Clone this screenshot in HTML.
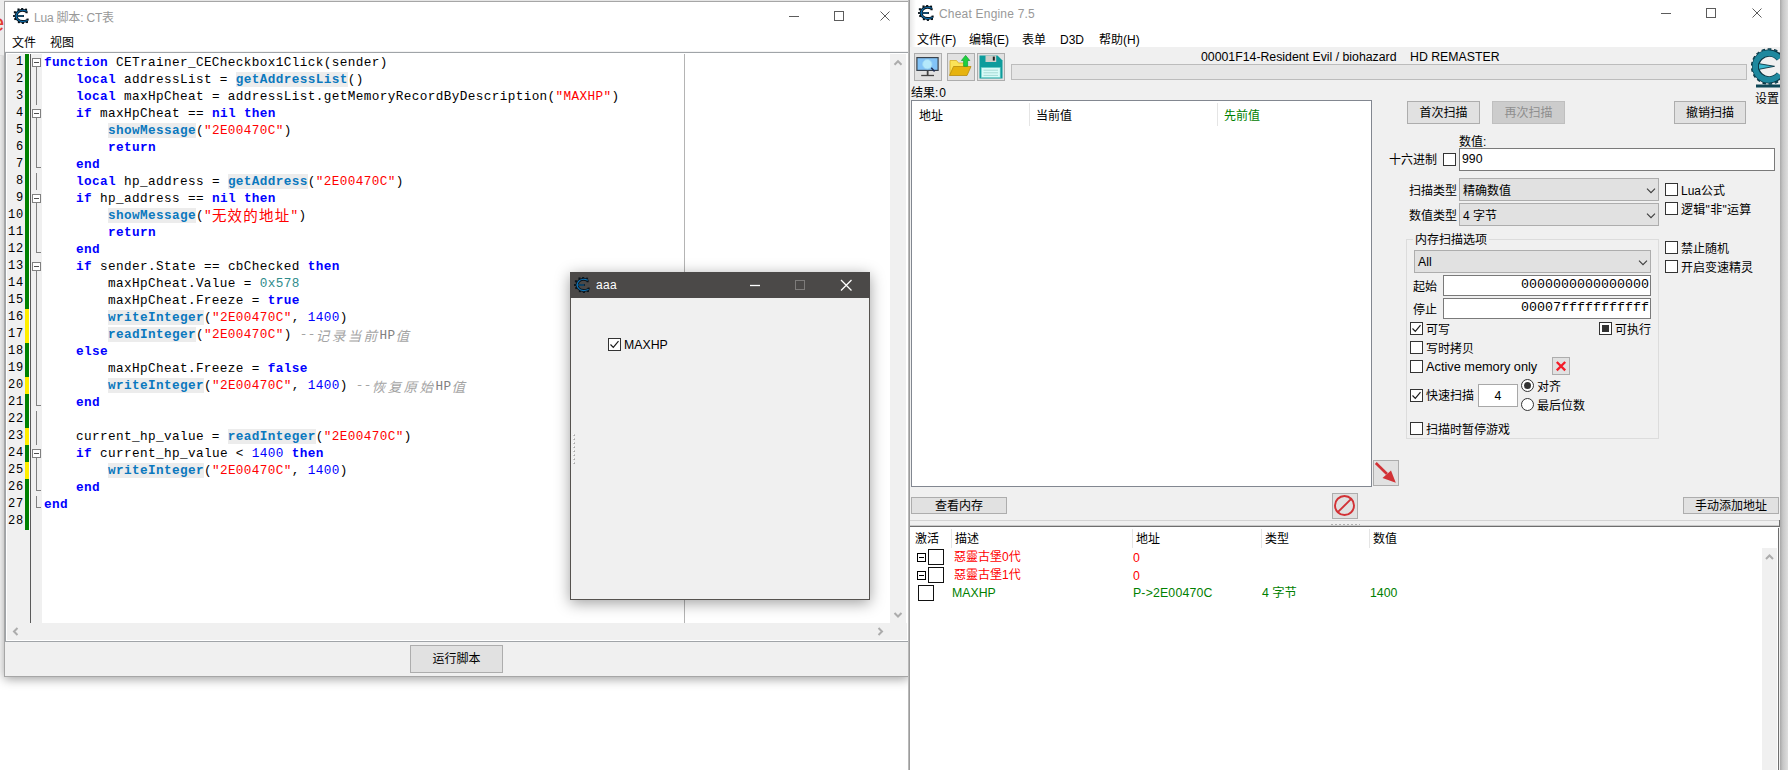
<!DOCTYPE html>
<html lang="zh"><head><meta charset="utf-8"><title>Cheat Engine 7.5</title>
<style>
*{box-sizing:border-box;margin:0;padding:0}
html,body{width:1788px;height:770px;overflow:hidden;background:#fff}
body{position:relative;font-family:"Liberation Sans","Noto Sans CJK SC",sans-serif;font-size:12px;color:#000;line-height:16px}
body>*{position:absolute}
i{font-style:normal;display:block}
.t{white-space:nowrap;line-height:16px;height:16px}
.l{font-size:12.3px}
.pl{font-size:12.3px;white-space:pre}
.mono{font-family:"Liberation Mono",monospace;font-size:13.33px}
#lwsh{box-shadow:0 2px 10px rgba(0,0,0,.38)}
#lw{background:#fff;border:1px solid #a6a6a6}
#ce{background:#f0f0f0;border:1px solid #9c9c9c;box-shadow:-1px 0 0 #b9b9b9}
#aw{background:#f0f0f0;border:1px solid #55524f;box-shadow:0 3px 14px rgba(0,0,0,.38)}
.no,.tx{font-family:"Liberation Mono","Noto Sans CJK SC",monospace;font-size:12.7px;letter-spacing:.380px;line-height:17px;height:17px;white-space:pre}
.no{left:7px;width:17px;text-align:right;font-size:12px;letter-spacing:.800px}
.bar{left:25px;width:4px;height:17px}
.tx{left:44px;color:#000}
.kw{color:#0000ff;font-weight:bold}
.fn{color:#0a78be;background:#ececec;font-weight:bold}
.st{color:#ff0000}
.hx{color:#2e8b8b}
.nu{color:#0000ff}
.cm{color:#a4a4a4;font-style:italic}
.cj{position:relative;line-height:0;font-family:"Noto Sans CJK SC",sans-serif}
.st .cj{font-size:14.5px;letter-spacing:1.2px;top:2px}
.cm .cj{font-size:13.5px;letter-spacing:2.4px;top:3px}
.cl{font-style:normal;color:#808080;position:relative;top:1px}
.fb{left:32px;width:9px;height:9px;border:1px solid #808080;background:#fff}
.fb:after{content:"";position:absolute;left:1px;top:3px;width:5px;height:1px;background:#505050}
.fv{left:36px;width:1px;background:#808080}
.fhk{left:36px;width:5px;height:1px;background:#808080}
.btn{background:#e1e1e1;border:1px solid #adadad;text-align:center;white-space:nowrap}
.cb{background:#fff;border:1px solid #333}
</style></head><body>
<div id="lwsh" style="left:4px;top:1px;width:905px;height:676px"></div>
<div style="left:0px;top:0px;width:909px;height:1px;background:#e6e6e6"></div>
<div style="left:0px;top:0px;width:4px;height:55px;background:#ececec"></div>
<div style="left:0px;top:55px;width:4px;height:1px;background:#dcdcdc"></div>
<div class="t" style="left:-8.5px;top:11px;color:#e23b30;font-size:23px;line-height:24px;height:24px">e</div>
<div id="lw" style="left:4px;top:1px;width:905px;height:676px"></div>
<svg style="left:13px;top:8px" width="16" height="16" viewBox="0 0 16 16"><g fill="#08131b"><rect x="4.45" y="0.45" width="2.1" height="2.1"/><rect x="8.15" y="-0.15" width="2.1" height="2.1"/><rect x="11.95" y="0.65" width="2.1" height="2.1"/><rect x="0.85" y="3.25" width="2.1" height="2.1"/><rect x="1.25" y="9.95" width="2.1" height="2.1"/><rect x="4.85" y="13.05" width="2.1" height="2.1"/><rect x="8.85" y="13.85" width="2.1" height="2.1"/><rect x="12.85" y="12.95" width="2.1" height="2.1"/><rect x="13.55" y="10.55" width="2.1" height="2.1"/><rect x="12.55" y="3.15" width="2.1" height="2.1"/><rect x="0" y="7.1" width="11" height="1.8"/></g><path d="M13.8 3.3C10.3 1.9 6.2 2.2 4.4 4.6C3 6.5 3 9.5 4.5 11.4C6.5 13.7 10.8 13.9 14.6 12.5" fill="none" stroke="#08131b" stroke-width="2.9"/><path d="M13.8 3.3C10.3 1.9 6.2 2.2 4.4 4.6C3 6.5 3 9.5 4.5 11.4C6.5 13.7 10.8 13.9 14.6 12.5" fill="none" stroke="#0d6eac" stroke-width="1.2"/><path d="M2.5 8H10.3" stroke="#0d6eac" stroke-width=".9"/></svg>
<div class="t" style="left:34px;top:10px;color:#999;letter-spacing:-.2px">Lua 脚本: CT表</div>
<svg style="left:784px;top:6px" width="112" height="20"><g stroke="#5c5c5c" stroke-width="1" fill="none"><path d="M5 10.5H15"/><rect x="50.5" y="5.5" width="9" height="9"/><path d="M96.5 5.5L105.5 14.5M105.5 5.5L96.5 14.5"/></g></svg>
<div class="t" style="left:12px;top:35px;">文件</div>
<div class="t" style="left:50px;top:35px;">视图</div>
<div style="left:5px;top:51px;width:903px;height:1px;background:#f3f3f3"></div>
<div style="left:5px;top:52px;width:903px;height:1px;background:#a0a4a8"></div>
<div style="left:5px;top:53px;width:1px;height:588px;background:#a0a4a8"></div>
<div style="left:7px;top:54px;width:23px;height:569px;background:#f0f0f0"></div>
<div style="left:29px;top:54px;width:1px;height:476px;background:#fff"></div>
<div style="left:30px;top:54px;width:1px;height:569px;background:#5a5a5a"></div>
<div style="left:31px;top:54px;width:11px;height:569px;background:#f0f0f0"></div>
<div style="left:684px;top:54px;width:1px;height:569px;background:#b4b4b4"></div>
<div class="no" style="top:54px">1</div>
<i class="bar" style="top:54px;background:#008000"></i>
<i class="fb" style="top:58px"></i><i class="fv" style="top:67px;height:4px"></i>
<div class="tx" style="top:54px"><b class="kw">function</b> CETrainer_CECheckbox1Click(sender)</div>
<div class="no" style="top:71px">2</div>
<i class="bar" style="top:71px;background:#008000"></i>
<i class="fv" style="top:71px;height:17px"></i>
<div class="tx" style="top:71px">    <b class="kw">local</b> addressList = <span class="fn">getAddressList</span>()</div>
<div class="no" style="top:88px">3</div>
<i class="bar" style="top:88px;background:#008000"></i>
<i class="fv" style="top:88px;height:17px"></i>
<div class="tx" style="top:88px">    <b class="kw">local</b> maxHpCheat = addressList.getMemoryRecordByDescription(<span class="st">"MAXHP"</span>)</div>
<div class="no" style="top:105px">4</div>
<i class="bar" style="top:105px;background:#008000"></i>
<i class="fb" style="top:109px"></i><i class="fv" style="top:118px;height:4px"></i>
<div class="tx" style="top:105px">    <b class="kw">if</b> maxHpCheat == <b class="kw">nil</b> <b class="kw">then</b></div>
<div class="no" style="top:122px">5</div>
<i class="bar" style="top:122px;background:#008000"></i>
<i class="fv" style="top:122px;height:17px"></i>
<div class="tx" style="top:122px">        <span class="fn">showMessage</span>(<span class="st">"2E00470C"</span>)</div>
<div class="no" style="top:139px">6</div>
<i class="bar" style="top:139px;background:#008000"></i>
<i class="fv" style="top:139px;height:17px"></i>
<div class="tx" style="top:139px">        <b class="kw">return</b></div>
<div class="no" style="top:156px">7</div>
<i class="bar" style="top:156px;background:#008000"></i>
<i class="fv" style="top:156px;height:12px"></i><i class="fhk" style="top:167px"></i>
<div class="tx" style="top:156px">    <b class="kw">end</b></div>
<div class="no" style="top:173px">8</div>
<i class="bar" style="top:173px;background:#008000"></i>
<i class="fv" style="top:173px;height:17px"></i>
<div class="tx" style="top:173px">    <b class="kw">local</b> hp_address = <span class="fn">getAddress</span>(<span class="st">"2E00470C"</span>)</div>
<div class="no" style="top:190px">9</div>
<i class="bar" style="top:190px;background:#008000"></i>
<i class="fb" style="top:194px"></i><i class="fv" style="top:203px;height:4px"></i>
<div class="tx" style="top:190px">    <b class="kw">if</b> hp_address == <b class="kw">nil</b> <b class="kw">then</b></div>
<div class="no" style="top:207px">10</div>
<i class="bar" style="top:207px;background:#008000"></i>
<i class="fv" style="top:207px;height:17px"></i>
<div class="tx" style="top:207px">        <span class="fn">showMessage</span>(<span class="st">"<span class="cj">无效的地址</span>"</span>)</div>
<div class="no" style="top:224px">11</div>
<i class="bar" style="top:224px;background:#008000"></i>
<i class="fv" style="top:224px;height:17px"></i>
<div class="tx" style="top:224px">        <b class="kw">return</b></div>
<div class="no" style="top:241px">12</div>
<i class="bar" style="top:241px;background:#008000"></i>
<i class="fv" style="top:241px;height:12px"></i><i class="fhk" style="top:252px"></i>
<div class="tx" style="top:241px">    <b class="kw">end</b></div>
<div class="no" style="top:258px">13</div>
<i class="bar" style="top:258px;background:#008000"></i>
<i class="fb" style="top:262px"></i><i class="fv" style="top:271px;height:4px"></i>
<div class="tx" style="top:258px">    <b class="kw">if</b> sender.State == cbChecked <b class="kw">then</b></div>
<div class="no" style="top:275px">14</div>
<i class="bar" style="top:275px;background:#008000"></i>
<i class="fv" style="top:275px;height:17px"></i>
<div class="tx" style="top:275px">        maxHpCheat.Value = <span class="hx">0x578</span></div>
<div class="no" style="top:292px">15</div>
<i class="bar" style="top:292px;background:#008000"></i>
<i class="fv" style="top:292px;height:17px"></i>
<div class="tx" style="top:292px">        maxHpCheat.Freeze = <b class="kw">true</b></div>
<div class="no" style="top:309px">16</div>
<i class="bar" style="top:309px;background:#ffee00"></i>
<i class="fv" style="top:309px;height:17px"></i>
<div class="tx" style="top:309px">        <span class="fn">writeInteger</span>(<span class="st">"2E00470C"</span>, <span class="nu">1400</span>)</div>
<div class="no" style="top:326px">17</div>
<i class="bar" style="top:326px;background:#ffee00"></i>
<i class="fv" style="top:326px;height:17px"></i>
<div class="tx" style="top:326px">        <span class="fn">readInteger</span>(<span class="st">"2E00470C"</span>) <span class="cm">--<span class="cj">记录当前</span><span class="cl">HP</span><span class="cj">值</span></span></div>
<div class="no" style="top:343px">18</div>
<i class="bar" style="top:343px;background:#008000"></i>
<i class="fv" style="top:343px;height:17px"></i>
<div class="tx" style="top:343px">    <b class="kw">else</b></div>
<div class="no" style="top:360px">19</div>
<i class="bar" style="top:360px;background:#008000"></i>
<i class="fv" style="top:360px;height:17px"></i>
<div class="tx" style="top:360px">        maxHpCheat.Freeze = <b class="kw">false</b></div>
<div class="no" style="top:377px">20</div>
<i class="bar" style="top:377px;background:#ffee00"></i>
<i class="fv" style="top:377px;height:17px"></i>
<div class="tx" style="top:377px">        <span class="fn">writeInteger</span>(<span class="st">"2E00470C"</span>, <span class="nu">1400</span>) <span class="cm">--<span class="cj">恢复原始</span><span class="cl">HP</span><span class="cj">值</span></span></div>
<div class="no" style="top:394px">21</div>
<i class="bar" style="top:394px;background:#008000"></i>
<i class="fv" style="top:394px;height:12px"></i><i class="fhk" style="top:405px"></i>
<div class="tx" style="top:394px">    <b class="kw">end</b></div>
<div class="no" style="top:411px">22</div>
<i class="bar" style="top:411px;background:#008000"></i>
<i class="fv" style="top:411px;height:17px"></i>
<div class="no" style="top:428px">23</div>
<i class="bar" style="top:428px;background:#ffee00"></i>
<i class="fv" style="top:428px;height:17px"></i>
<div class="tx" style="top:428px">    current_hp_value = <span class="fn">readInteger</span>(<span class="st">"2E00470C"</span>)</div>
<div class="no" style="top:445px">24</div>
<i class="bar" style="top:445px;background:#008000"></i>
<i class="fb" style="top:449px"></i><i class="fv" style="top:458px;height:4px"></i>
<div class="tx" style="top:445px">    <b class="kw">if</b> current_hp_value &lt; <span class="nu">1400</span> <b class="kw">then</b></div>
<div class="no" style="top:462px">25</div>
<i class="bar" style="top:462px;background:#ffee00"></i>
<i class="fv" style="top:462px;height:17px"></i>
<div class="tx" style="top:462px">        <span class="fn">writeInteger</span>(<span class="st">"2E00470C"</span>, <span class="nu">1400</span>)</div>
<div class="no" style="top:479px">26</div>
<i class="bar" style="top:479px;background:#008000"></i>
<i class="fv" style="top:479px;height:12px"></i><i class="fhk" style="top:490px"></i>
<div class="tx" style="top:479px">    <b class="kw">end</b></div>
<div class="no" style="top:496px">27</div>
<i class="bar" style="top:496px;background:#008000"></i>
<i class="fv" style="top:496px;height:12px"></i><i class="fhk" style="top:507px"></i>
<div class="tx" style="top:496px"><b class="kw">end</b></div>
<div class="no" style="top:513px">28</div>
<i class="bar" style="top:513px;background:#008000"></i>
<div style="left:890px;top:54px;width:16px;height:569px;background:#f0f0f0"></div>
<div style="left:7px;top:623px;width:900px;height:17px;background:#f0f0f0"></div>
<svg style="left:890px;top:54px" width="17" height="569"><g stroke="#acacac" stroke-width="2" fill="none"><path d="M4.5 10.7L8 7.2L11.5 10.7"/><path d="M4.5 559L8 562.5L11.5 559"/></g></svg>
<svg style="left:7px;top:623px" width="884" height="17"><g stroke="#acacac" stroke-width="2" fill="none"><path d="M10.5 5L7 8.5L10.5 12"/><path d="M871.5 5L875 8.5L871.5 12"/></g></svg>
<div style="left:5px;top:641px;width:903px;height:1px;background:#a0a4a8"></div>
<div style="left:5px;top:642px;width:903px;height:34px;background:#f0f0f0"></div>
<div class="btn" style="left:410px;top:645px;width:93px;height:28px;line-height:27px;">运行脚本</div>
<div id="ce" style="left:909px;top:-2px;width:872px;height:790px"></div>
<div style="left:910px;top:0px;width:870px;height:47px;background:#fff"></div>
<div style="left:910px;top:0px;width:6px;height:47px;background:linear-gradient(to right,rgba(0,0,0,.09),rgba(0,0,0,0))"></div>
<svg style="left:918px;top:5px" width="16" height="16" viewBox="0 0 16 16"><g fill="#08131b"><rect x="4.45" y="0.45" width="2.1" height="2.1"/><rect x="8.15" y="-0.15" width="2.1" height="2.1"/><rect x="11.95" y="0.65" width="2.1" height="2.1"/><rect x="0.85" y="3.25" width="2.1" height="2.1"/><rect x="1.25" y="9.95" width="2.1" height="2.1"/><rect x="4.85" y="13.05" width="2.1" height="2.1"/><rect x="8.85" y="13.85" width="2.1" height="2.1"/><rect x="12.85" y="12.95" width="2.1" height="2.1"/><rect x="13.55" y="10.55" width="2.1" height="2.1"/><rect x="12.55" y="3.15" width="2.1" height="2.1"/><rect x="0" y="7.1" width="11" height="1.8"/></g><path d="M13.8 3.3C10.3 1.9 6.2 2.2 4.4 4.6C3 6.5 3 9.5 4.5 11.4C6.5 13.7 10.8 13.9 14.6 12.5" fill="none" stroke="#08131b" stroke-width="2.9"/><path d="M13.8 3.3C10.3 1.9 6.2 2.2 4.4 4.6C3 6.5 3 9.5 4.5 11.4C6.5 13.7 10.8 13.9 14.6 12.5" fill="none" stroke="#0d6eac" stroke-width="1.2"/><path d="M2.5 8H10.3" stroke="#0d6eac" stroke-width=".9"/></svg>
<div class="t" style="left:939px;top:6px;color:#999;letter-spacing:.2px">Cheat Engine 7.5</div>
<svg style="left:1656px;top:3px" width="112" height="20"><g stroke="#5c5c5c" stroke-width="1" fill="none"><path d="M5 10.5H15"/><rect x="50.5" y="5.5" width="9" height="9"/><path d="M96.5 5.5L105.5 14.5M105.5 5.5L96.5 14.5"/></g></svg>
<div class="t" style="left:917px;top:32px;">文件(F)</div>
<div class="t" style="left:969px;top:32px;">编辑(E)</div>
<div class="t" style="left:1022px;top:32px;">表单</div>
<div class="t" style="left:1060px;top:32px;">D3D</div>
<div class="t" style="left:1099px;top:32px;">帮助(H)</div>
<div class="btn" style="left:914px;top:53px;width:28px;height:28px;line-height:28px;"></div>
<div class="btn" style="left:947px;top:53px;width:28px;height:28px;line-height:28px;"></div>
<div class="btn" style="left:977px;top:53px;width:28px;height:28px;line-height:28px;"></div>
<svg style="left:916px;top:56px" width="24" height="22" viewBox="0 0 24 22"><rect x=".3" y="1" width="22.4" height="14" fill="#39424c"/><rect x="1.5" y="2.2" width="20" height="11.6" fill="#82c3f7"/><circle cx="11.3" cy="8.2" r="4.7" fill="#b4e8fb" stroke="#9ad6f3" stroke-width=".8"/><path d="M15.3 11.8L18.6 15.6" stroke="#1f2d55" stroke-width="1.5"/><path d="M11.65 15V19.5" stroke="#444" stroke-width="1.8"/><path d="M5.2 19.5H18" stroke="#444" stroke-width="1.3"/></svg>
<svg style="left:948px;top:54px" width="24" height="24" viewBox="0 0 24 24"><path d="M2 21V6.5H8.5L10.5 9H18V13" fill="#fbe358" stroke="#d9ae25" stroke-width=".8"/><path d="M1.5 21.5L5.5 12.5H23L19 21.5Z" fill="#e6b30f" stroke="#b98b0b" stroke-width=".8"/><path d="M17.6 1.4L21.8 6.5H19.6V12.3H15.6V6.5H13.4Z" fill="#1fd03f" stroke="#12a030" stroke-width=".7"/></svg>
<svg style="left:978px;top:53.5px" width="26" height="26" viewBox="0 0 26 26"><path d="M1.5 1.5H19.5L24.5 6.5V24.5H1.5Z" fill="#0d9c9c"/><rect x="7.5" y="1.5" width="10.7" height="6.5" fill="#cfcfca"/><rect x="14.8" y="2.6" width="2" height="4" fill="#222"/><rect x="3.2" y="13.5" width="19" height="10.2" fill="#d8fbf8" stroke="#5cc7c2" stroke-width=".6"/><path d="M5.5 16.2H20M5.5 18.8H20M5.5 21.4H20" stroke="#a5dad5" stroke-width="1"/></svg>
<div class="t pl" style="left:1201px;top:49px;">00001F14-Resident Evil / biohazard<span style="display:inline-block;width:13.5px"></span>HD REMASTER</div>
<div style="left:1011px;top:64px;width:736px;height:16px;background:#e6e6e6;border:1px solid #bcbcbc"></div>
<svg style="left:1750px;top:47px" width="30" height="43" viewBox="0 0 30 43"><path d="M31.1 8.8A16 16 0 1 0 31.1 30.2" fill="none" stroke="#0b3442" stroke-width="4.6" stroke-dasharray="3.3 2.4"/><path d="M31.1 8.8A16 16 0 1 0 31.1 30.2" fill="none" stroke="#1c8196" stroke-width="2.8" stroke-dasharray="2.1 3.6" stroke-dashoffset="-.6"/><path d="M29.6 11.2A13.4 13.4 0 1 0 29.6 27.8" fill="none" stroke="#0b3442" stroke-width="7.4"/><path d="M29.4 11.5A13.4 13.4 0 1 0 29.4 27.5" fill="none" stroke="#1e889e" stroke-width="5.6"/><path d="M8.5 16.6L24.5 19.3L8.5 22.4Z" fill="#3ab8ce" stroke="#0b3442" stroke-width=".9"/><rect x="6" y="37.5" width="24" height="3" fill="#0d4656"/></svg>
<div class="t" style="left:1755px;top:91px;">设置</div>
<div class="t" style="left:911px;top:85px;">结果:<span style="margin-left:1px">0</span></div>
<div style="left:911px;top:100px;width:461px;height:387px;background:#fff;border:1px solid #828790"></div>
<div class="t" style="left:919px;top:108px;">地址</div>
<div class="t" style="left:1036px;top:108px;">当前值</div>
<div class="t" style="left:1224px;top:108px;color:#008000">先前值</div>
<div style="left:1029px;top:103px;width:1px;height:23px;background:#e5e5e5"></div>
<div style="left:1217px;top:103px;width:1px;height:23px;background:#e5e5e5"></div>
<div class="btn" style="left:1407px;top:101px;width:73px;height:23px;line-height:23px;">首次扫描</div>
<div class="btn" style="left:1492px;top:101px;width:73px;height:23px;line-height:23px;background:#ccc;border-color:#bfbfbf;color:#8e8e8e">再次扫描</div>
<div class="btn" style="left:1674px;top:101px;width:72px;height:23px;line-height:23px;">撤销扫描</div>
<div class="t" style="left:1459px;top:134px;">数值:</div>
<div class="t" style="left:1389px;top:152px;">十六进制</div>
<div class="cb" style="left:1443px;top:153px;width:13px;height:13px"></div>
<div style="left:1459px;top:148px;width:316px;height:23px;background:#fff;border:1px solid #7a7a7a"></div>
<div class="t l" style="left:1462px;top:151px;">990</div>
<div class="t" style="left:1409px;top:183px;">扫描类型</div>
<div style="left:1459px;top:178px;width:200px;height:23px;background:#e1e1e1;border:1px solid #adadad"></div>
<div class="t" style="left:1463px;top:183px;">精确数值</div>
<svg style="left:1645.5px;top:187.5px" width="10" height="6"><path d="M1 .7L5 4.7L9 .7" stroke="#3c3c3c" fill="none" stroke-width="1.1"/></svg>
<div class="t" style="left:1409px;top:208px;">数值类型</div>
<div style="left:1459px;top:203px;width:200px;height:23px;background:#e1e1e1;border:1px solid #adadad"></div>
<div class="t" style="left:1463px;top:208px;">4 字节</div>
<svg style="left:1645.5px;top:212.5px" width="10" height="6"><path d="M1 .7L5 4.7L9 .7" stroke="#3c3c3c" fill="none" stroke-width="1.1"/></svg>
<div class="cb" style="left:1665px;top:183px;width:13px;height:13px"></div>
<div class="t" style="left:1681px;top:183px;">Lua公式</div>
<div class="cb" style="left:1665px;top:202px;width:13px;height:13px"></div>
<div class="t" style="left:1681px;top:202px;letter-spacing:.3px">逻辑"非"运算</div>
<div class="cb" style="left:1665px;top:241px;width:13px;height:13px"></div>
<div class="t" style="left:1681px;top:241px;">禁止随机</div>
<div class="cb" style="left:1665px;top:260px;width:13px;height:13px"></div>
<div class="t" style="left:1681px;top:260px;">开启变速精灵</div>
<div style="left:1406px;top:239px;width:253px;height:200px;border:1px solid #dcdcdc"></div>
<div class="t" style="left:1413px;top:232px;background:#f0f0f0;padding:0 2px">内存扫描选项</div>
<div style="left:1414px;top:250px;width:237px;height:23px;background:#e1e1e1;border:1px solid #adadad"></div>
<div class="t l" style="left:1418px;top:254px;">All</div>
<svg style="left:1637.5px;top:259.5px" width="10" height="6"><path d="M1 .7L5 4.7L9 .7" stroke="#3c3c3c" fill="none" stroke-width="1.1"/></svg>
<div class="t" style="left:1413px;top:279px;">起始</div>
<div style="left:1443px;top:275px;width:208px;height:21px;background:#fff;border:1px solid #7a7a7a"></div>
<div class="t mono" style="left:1443px;top:277px;width:206px;text-align:right">0000000000000000</div>
<div class="t" style="left:1413px;top:302px;">停止</div>
<div style="left:1443px;top:298px;width:208px;height:21px;background:#fff;border:1px solid #7a7a7a"></div>
<div class="t mono" style="left:1443px;top:300px;width:206px;text-align:right">00007fffffffffff</div>
<div class="cb" style="left:1410px;top:322px;width:13px;height:13px"></div>
<svg style="left:1410px;top:322px" width="13" height="13"><path d="M2.5 6.5L5.3 9.3L10.5 3.2" stroke="#1a1a1a" fill="none" stroke-width="1.2"/></svg>
<div class="t" style="left:1426px;top:322px;">可写</div>
<div class="cb" style="left:1599px;top:322px;width:13px;height:13px"></div>
<div style="left:1602px;top:325px;width:7px;height:7px;background:#333"></div>
<div class="t" style="left:1615px;top:322px;">可执行</div>
<div class="cb" style="left:1410px;top:341px;width:13px;height:13px"></div>
<div class="t" style="left:1426px;top:341px;">写时拷贝</div>
<div class="cb" style="left:1410px;top:360px;width:13px;height:13px"></div>
<div class="t" style="left:1426px;top:359px;font-size:12.75px">Active memory only</div>
<div class="btn" style="left:1552px;top:357px;width:18px;height:18px;line-height:18px;"></div>
<svg style="left:1552px;top:357px" width="18" height="18"><path d="M4.8 5L13.2 13.4M13.2 5L4.8 13.4" stroke="#f41c28" stroke-width="2.3"/></svg>
<div class="cb" style="left:1410px;top:389px;width:13px;height:13px"></div>
<svg style="left:1410px;top:389px" width="13" height="13"><path d="M2.5 6.5L5.3 9.3L10.5 3.2" stroke="#1a1a1a" fill="none" stroke-width="1.2"/></svg>
<div class="t" style="left:1426px;top:388px;">快速扫描</div>
<div style="left:1478px;top:384px;width:40px;height:23px;background:#fff;border:1px solid #a8a8a8"></div>
<div class="t l" style="left:1478px;top:388px;width:40px;text-align:center">4</div>
<svg style="left:1521px;top:379px" width="13" height="32"><circle cx="6.5" cy="6.5" r="6" fill="#fff" stroke="#333"/><circle cx="6.5" cy="6.5" r="3.5" fill="#333"/><circle cx="6.5" cy="25.5" r="6" fill="#fff" stroke="#333"/></svg>
<div class="t" style="left:1537px;top:379px;">对齐</div>
<div class="t" style="left:1537px;top:398px;">最后位数</div>
<div class="cb" style="left:1410px;top:422px;width:13px;height:13px"></div>
<div class="t" style="left:1426px;top:422px;">扫描时暂停游戏</div>
<div class="btn" style="left:1373px;top:460px;width:26px;height:26px;line-height:26px;"></div>
<svg style="left:1373px;top:460px" width="26" height="26"><path d="M2.8 3L14 14" stroke="#d23236" stroke-width="2.6"/><path d="M22.8 22.8L9.5 18L18 10.5Z" fill="#d23236"/></svg>
<div class="btn" style="left:911px;top:497px;width:96px;height:17px;line-height:17px;">查看内存</div>
<div class="btn" style="left:1332px;top:493px;width:26px;height:26px;line-height:26px;"></div>
<svg style="left:1332px;top:493px" width="26" height="26"><circle cx="12.5" cy="12.5" r="9.5" fill="none" stroke="#d23236" stroke-width="1.9"/><path d="M5.8 19.2L19.2 5.8" stroke="#d23236" stroke-width="1.9"/></svg>
<div class="btn" style="left:1683px;top:497px;width:96px;height:17px;line-height:17px;">手动添加地址</div>
<div style="left:910px;top:520px;width:870px;height:1px;background:#d4d4d4"></div>
<div style="left:1331px;top:523.5px;width:29px;height:2px;background:repeating-linear-gradient(to right,#b0b0b0 0 2px,transparent 2px 4px)"></div>
<div style="left:910px;top:526px;width:870px;height:1px;background:#6e6e6e"></div>
<div style="left:910px;top:525px;width:870px;height:1px;background:#c9c9c9"></div>
<div style="left:1779px;top:520px;width:1px;height:7px;background:#6e6e6e"></div>
<div style="left:910px;top:527px;width:868px;height:260px;background:#fff"></div>
<div style="left:1778px;top:528px;width:1px;height:260px;background:#6e6e6e"></div>
<div class="t" style="left:915px;top:531px;">激活</div>
<div class="t" style="left:955px;top:531px;">描述</div>
<div class="t" style="left:1136px;top:531px;">地址</div>
<div class="t" style="left:1265px;top:531px;">类型</div>
<div class="t" style="left:1373px;top:531px;">数值</div>
<div style="left:951px;top:529px;width:1px;height:19px;background:#e5e5e5"></div>
<div style="left:1132px;top:529px;width:1px;height:19px;background:#e5e5e5"></div>
<div style="left:1261px;top:529px;width:1px;height:19px;background:#e5e5e5"></div>
<div style="left:1369px;top:529px;width:1px;height:19px;background:#e5e5e5"></div>
<div style="left:917px;top:553px;width:9px;height:9px;border:1px solid #000;background:#fff"></div>
<div style="left:919px;top:557px;width:5px;height:1px;background:#000"></div>
<div style="left:928px;top:549px;width:16px;height:16px;background:#fff;border:1px solid #111"></div>
<div class="t" style="left:954px;top:549px;color:#ff0000;font-family:'Liberation Sans','Noto Sans CJK TC',sans-serif">惡靈古堡0代</div>
<div class="t l" style="left:1133px;top:550px;color:#ff0000">0</div>
<div style="left:917px;top:571px;width:9px;height:9px;border:1px solid #000;background:#fff"></div>
<div style="left:919px;top:575px;width:5px;height:1px;background:#000"></div>
<div style="left:928px;top:567px;width:16px;height:16px;background:#fff;border:1px solid #111"></div>
<div class="t" style="left:954px;top:567px;color:#ff0000;font-family:'Liberation Sans','Noto Sans CJK TC',sans-serif">惡靈古堡1代</div>
<div class="t l" style="left:1133px;top:568px;color:#ff0000">0</div>
<div style="left:918px;top:585px;width:16px;height:16px;background:#fff;border:1px solid #111"></div>
<div class="t l" style="left:952px;top:585px;color:#008000">MAXHP</div>
<div class="t l" style="left:1133px;top:585px;color:#008000;letter-spacing:.17px">P-&gt;2E00470C</div>
<div class="t l" style="left:1262px;top:585px;color:#008000">4 字节</div>
<div class="t l" style="left:1370px;top:585px;color:#008000">1400</div>
<div style="left:1762px;top:548px;width:15px;height:240px;background:#f0f0f0"></div>
<svg style="left:1762px;top:548px" width="15" height="17"><path d="M4 11L7.5 7.5L11 11" stroke="#acacac" stroke-width="2" fill="none"/></svg>
<div style="left:1780px;top:0px;width:8px;height:770px;background:linear-gradient(to right,#a8a8a8,#c6c6c6 35%,#dedede)"></div>
<div id="aw" style="left:570px;top:272px;width:300px;height:328px"></div>
<div style="left:570px;top:272px;width:300px;height:26px;background:#4b4948"></div>
<svg style="left:574px;top:277px" width="16" height="16" viewBox="0 0 16 16"><g fill="#0a141c"><rect x="4.45" y="0.45" width="2.1" height="2.1"/><rect x="8.15" y="-0.15" width="2.1" height="2.1"/><rect x="11.95" y="0.65" width="2.1" height="2.1"/><rect x="0.85" y="3.25" width="2.1" height="2.1"/><rect x="1.25" y="9.95" width="2.1" height="2.1"/><rect x="4.85" y="13.05" width="2.1" height="2.1"/><rect x="8.85" y="13.85" width="2.1" height="2.1"/><rect x="12.85" y="12.95" width="2.1" height="2.1"/><rect x="13.55" y="10.55" width="2.1" height="2.1"/><rect x="12.55" y="3.15" width="2.1" height="2.1"/><rect x="0" y="7.1" width="11" height="1.8"/></g><path d="M13.8 3.3C10.3 1.9 6.2 2.2 4.4 4.6C3 6.5 3 9.5 4.5 11.4C6.5 13.7 10.8 13.9 14.6 12.5" fill="none" stroke="#0a141c" stroke-width="2.9"/><path d="M13.8 3.3C10.3 1.9 6.2 2.2 4.4 4.6C3 6.5 3 9.5 4.5 11.4C6.5 13.7 10.8 13.9 14.6 12.5" fill="none" stroke="#1173b3" stroke-width="1.2"/><path d="M2.5 8H10.3" stroke="#1173b3" stroke-width=".9"/></svg>
<div class="t" style="left:596px;top:277px;color:#fff;letter-spacing:.3px">aaa</div>
<svg style="left:745px;top:275px" width="112" height="20"><g fill="none"><path d="M5 10.5H15" stroke="#fff" stroke-width="1.3"/><rect x="50.5" y="5.5" width="9" height="9" stroke="#7d7b7a"/><path d="M96 5L106.5 15.5M106.5 5L96 15.5" stroke="#fff" stroke-width="1.3"/></g></svg>
<div class="cb" style="left:608px;top:338px;width:13px;height:13px"></div>
<svg style="left:608px;top:338px" width="13" height="13"><path d="M2.5 6.5L5.3 9.3L10.5 3.2" stroke="#1a1a1a" fill="none" stroke-width="1.2"/></svg>
<div class="t l" style="left:624px;top:337px;">MAXHP</div>
<div style="left:573px;top:434px;width:1px;height:1px;background:#fff"></div>
<div style="left:574px;top:435px;width:1px;height:1px;background:#a8a8a8"></div>
<div style="left:573px;top:435px;width:1px;height:1px;background:#c8c8c8"></div>
<div style="left:574px;top:434px;width:1px;height:1px;background:#c8c8c8"></div>
<div style="left:573px;top:438px;width:1px;height:1px;background:#fff"></div>
<div style="left:574px;top:439px;width:1px;height:1px;background:#a8a8a8"></div>
<div style="left:573px;top:439px;width:1px;height:1px;background:#c8c8c8"></div>
<div style="left:574px;top:438px;width:1px;height:1px;background:#c8c8c8"></div>
<div style="left:573px;top:442px;width:1px;height:1px;background:#fff"></div>
<div style="left:574px;top:443px;width:1px;height:1px;background:#a8a8a8"></div>
<div style="left:573px;top:443px;width:1px;height:1px;background:#c8c8c8"></div>
<div style="left:574px;top:442px;width:1px;height:1px;background:#c8c8c8"></div>
<div style="left:573px;top:446px;width:1px;height:1px;background:#fff"></div>
<div style="left:574px;top:447px;width:1px;height:1px;background:#a8a8a8"></div>
<div style="left:573px;top:447px;width:1px;height:1px;background:#c8c8c8"></div>
<div style="left:574px;top:446px;width:1px;height:1px;background:#c8c8c8"></div>
<div style="left:573px;top:450px;width:1px;height:1px;background:#fff"></div>
<div style="left:574px;top:451px;width:1px;height:1px;background:#a8a8a8"></div>
<div style="left:573px;top:451px;width:1px;height:1px;background:#c8c8c8"></div>
<div style="left:574px;top:450px;width:1px;height:1px;background:#c8c8c8"></div>
<div style="left:573px;top:454px;width:1px;height:1px;background:#fff"></div>
<div style="left:574px;top:455px;width:1px;height:1px;background:#a8a8a8"></div>
<div style="left:573px;top:455px;width:1px;height:1px;background:#c8c8c8"></div>
<div style="left:574px;top:454px;width:1px;height:1px;background:#c8c8c8"></div>
<div style="left:573px;top:458px;width:1px;height:1px;background:#fff"></div>
<div style="left:574px;top:459px;width:1px;height:1px;background:#a8a8a8"></div>
<div style="left:573px;top:459px;width:1px;height:1px;background:#c8c8c8"></div>
<div style="left:574px;top:458px;width:1px;height:1px;background:#c8c8c8"></div>
<div style="left:573px;top:462px;width:1px;height:1px;background:#fff"></div>
<div style="left:574px;top:463px;width:1px;height:1px;background:#a8a8a8"></div>
<div style="left:573px;top:463px;width:1px;height:1px;background:#c8c8c8"></div>
<div style="left:574px;top:462px;width:1px;height:1px;background:#c8c8c8"></div>
</body></html>
